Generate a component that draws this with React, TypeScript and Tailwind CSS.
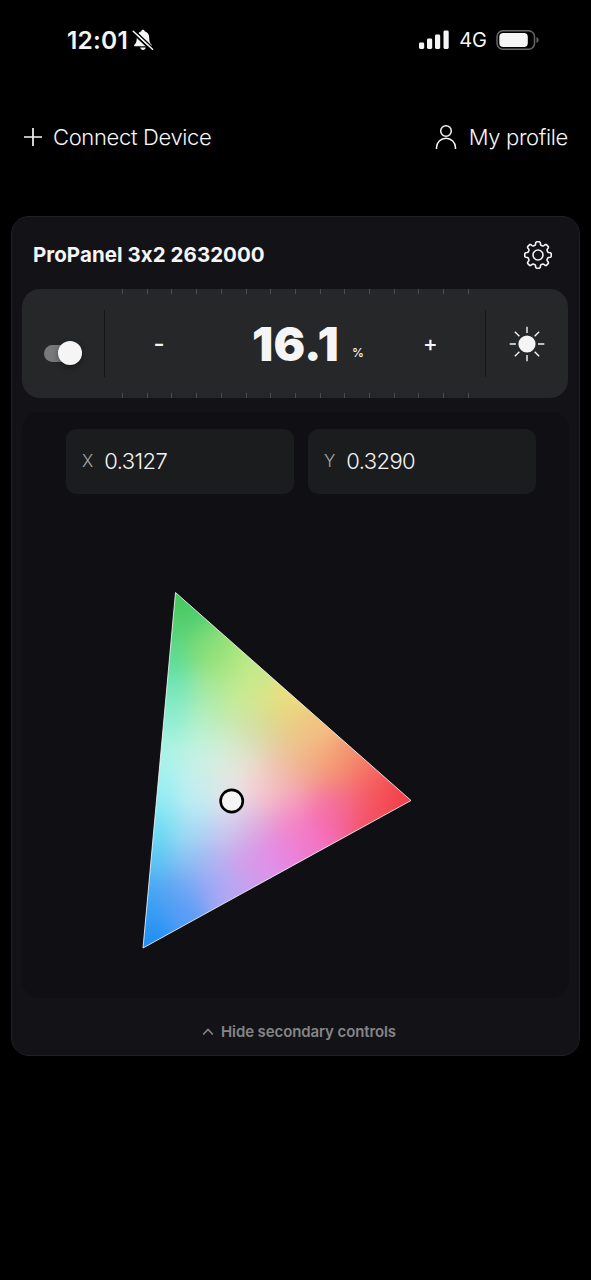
type Sample = [x: number, y: number, color: string];

// Gamut colours, in the coordinates of the chart
const samples: Sample[] = [
  [57, 28, "#45c75e"], [62, 55, "#55d073"], [82, 80, "#80dc76"], [50, 90, "#5adb98"],
  [102, 93, "#a3e47c"], [130, 105, "#c5ea8c"], [55, 120, "#78e7bd"], [90, 120, "#a5e8a0"],
  [115, 130, "#c3ec95"], [140, 130, "#d8e48a"], [167, 130, "#ecdf7c"], [50, 150, "#8cedd3"],
  [85, 150, "#b5efc4"], [115, 155, "#cbe9b4"], [140, 160, "#d8d99a"], [170, 155, "#e8cd85"],
  [195, 160, "#f3c283"], [45, 180, "#aef3e5"], [80, 180, "#c3f3e0"], [110, 185, "#d5f0dc"],
  [130, 180, "#dadfbe"], [165, 185, "#eac69a"], [195, 185, "#f5b080"], [225, 190, "#f49872"],
  [40, 205, "#a2f1f1"], [75, 210, "#c4f0ee"], [100, 205, "#dfe8e0"], [128, 203, "#f5dede"],
  [155, 205, "#f3bfb8"], [185, 205, "#f0ab8c"], [215, 205, "#f5956f"], [245, 205, "#f56a60"],
  [40, 230, "#8eebf5"], [75, 230, "#c0ecf4"], [112, 232, "#e5e3ee"], [145, 225, "#f4c3cc"],
  [175, 230, "#f6a0c0"], [205, 230, "#f57aa5"], [230, 225, "#f56878"], [285, 230, "#f33e48"],
  [260, 225, "#f45058"], [37, 260, "#6cdcf4"], [70, 260, "#a5def4"], [105, 260, "#c8cdf0"],
  [135, 255, "#dab0e0"], [170, 255, "#f28ac8"], [205, 250, "#f768b0"], [220, 240, "#f566a0"],
  [245, 247, "#f25060"], [35, 290, "#5cc5f3"], [70, 290, "#8fc5f2"], [95, 290, "#b5b5f3"],
  [125, 285, "#d5a0e8"], [155, 280, "#e785e4"], [185, 265, "#f077cc"], [30, 320, "#48a8f3"],
  [65, 315, "#6ea8f5"], [90, 315, "#9fa5f5"], [115, 318, "#b9a8f4"], [135, 300, "#da95ea"],
  [28, 345, "#2f98f3"], [60, 335, "#559cf5"], [25, 375, "#1f8ef3"],
];

const CELL = 7;

function colorAt(x: number, y: number) {
  let total = 0;
  const sum = [0, 0, 0];
  for (const [sx, sy, color] of samples) {
    const d = (x - sx) ** 2 + (y - sy) ** 2;
    const weight = Math.exp(-d / 430) + 1e-4 / (1 + d * d * 1e-4);
    const n = parseInt(color.slice(1), 16);
    sum[0] += weight * (n >> 16);
    sum[1] += weight * ((n >> 8) & 255);
    sum[2] += weight * (n & 255);
    total += weight;
  }
  return `rgb(${sum.map((c) => Math.round(c / total)).join(",")})`;
}

const cells: { x: number; y: number; fill: string }[] = [];
for (let y = 7; y < 400; y += CELL) {
  for (let x = 7; x < 310; x += CELL) {
    cells.push({ x, y, fill: colorAt(x + CELL / 2, y + CELL / 2) });
  }
}

const TRIANGLE = "55.5,22.5 291,230.5 23,378";

function GamutChart() {
  return (
    <svg width="310" height="400" viewBox="0 0 310 400">
      <defs>
        <clipPath id="gamut">
          <polygon points={TRIANGLE} />
        </clipPath>
        <filter id="smooth" colorInterpolationFilters="sRGB">
          <feGaussianBlur stdDeviation="5" />
        </filter>
      </defs>
      <g clipPath="url(#gamut)">
        <g filter="url(#smooth)">
          {cells.map((c) => (
            <rect key={`${c.x}-${c.y}`} x={c.x} y={c.y} width={CELL + 0.5} height={CELL + 0.5} fill={c.fill} />
          ))}
        </g>
      </g>
      <polygon points={TRIANGLE} fill="none" stroke="#fff" strokeOpacity="0.8" strokeWidth="1" />
      <circle cx="111.7" cy="231" r="11.1" fill="#f5f5f5" stroke="#000" strokeWidth="2.6" />
    </svg>
  );
}

function gearPath() {
  const steps: [number, number][] = [[-17, 10.2], [-13, 10.9], [-10.5, 12.6], [-6, 13.3], [6, 13.3], [10.5, 12.6], [13, 10.9], [17, 10.2]];
  const points: string[] = [];
  for (let tooth = 0; tooth < 8; tooth++) {
    for (const [offset, r] of steps) {
      const a = ((tooth * 45 + offset) * Math.PI) / 180;
      points.push(`${(15 + r * Math.cos(a)).toFixed(2)} ${(15 + r * Math.sin(a)).toFixed(2)}`);
    }
  }
  return `M${points.join("L")}Z`;
}

function GearIcon() {
  return (
    <svg width="30" height="30" viewBox="0 0 30 30" fill="none" stroke="#f2f2f2" strokeWidth="1.6" strokeLinejoin="round">
      <path d={gearPath()} />
      <circle cx="15" cy="15" r="5" />
    </svg>
  );
}

function SunIcon() {
  return (
    <svg width="36" height="36" viewBox="0 0 36 36" stroke="#f5f5f5" strokeWidth="1.4">
      <circle cx="18" cy="18" r="8.6" fill="#f5f5f5" stroke="none" />
      {[0, 45, 90, 135, 180, 225, 270, 315].map((a) => (
        <path key={a} d={a % 90 ? "M18 7.2V0.800" : "M18 6.900V0.700"} transform={`rotate(${a} 18 18)`} />
      ))}
    </svg>
  );
}

function StatusBar() {
  return (
    <div className="flex h-[80px] items-center justify-between pl-[67px] pr-[51px] text-[#f5f5f5]">
      <div className="flex items-center gap-[4px]">
        <span className="text-[24.5px] font-semibold tracking-[0.2px]">12:01</span>
        <svg width="22" height="22" viewBox="0 0 22 22">
          <path
            d="M11 .8c-.9 0-1.6.7-1.7 1.5C6.500 3.100 4.800 5.500 4.800 8.500c0 4-.8 5.600-2.200 7-.8.800-.5 1.800.5 1.800h15.800c1 0 1.300-1 .5-1.800-1.400-1.400-2.200-3-2.200-7 0-3-1.700-5.400-4.500-6.200C12.600 1.500 11.900.8 11 .8zM8.200 18.600c.3 1.400 1.400 2.300 2.800 2.300s2.500-.9 2.800-2.300z"
            fill="currentColor"
          />
          <path d="M0 3.200L19.500 21.500" stroke="#000" strokeWidth="2" />
          <path d="M1.900 0.900L21.400 19.200" stroke="#000" strokeWidth="1.500" />
          <path d="M1.200 2.200L20.500 20.300" stroke="currentColor" strokeWidth="1.500" strokeLinecap="round" />
        </svg>
      </div>
      <div className="flex items-center">
        <svg width="32" height="20" viewBox="0 0 32 20" fill="currentColor">
          <rect x="1" y="12.500" width="5.200" height="6.500" rx="1.400" />
          <rect x="9" y="8.500" width="5.200" height="10.500" rx="1.400" />
          <rect x="17" y="4.500" width="5.200" height="14.500" rx="1.400" />
          <rect x="25.500" y="0.500" width="5.200" height="18.500" rx="1.400" />
        </svg>
        <span className="ml-[9px] text-[20px]">4G</span>
        <svg className="ml-[9px]" width="44" height="20" viewBox="0 0 44 20">
          <rect x="1" y="0.800" width="37.500" height="18.400" rx="6" fill="none" stroke="#68686a" strokeWidth="1.500" />
          <rect x="3.300" y="3.100" width="28.500" height="13.800" rx="4" fill="currentColor" />
          <path d="M40.500 7v6c1.300-.5 2-1.600 2-3s-.7-2.500-2-3z" fill="#68686a" />
        </svg>
      </div>
    </div>
  );
}

function TickRow() {
  return (
    <div className="flex h-[5px] justify-between pl-[100px] pr-[99px]">
      {Array.from({ length: 15 }, (_, i) => (
        <span key={i} className="w-px bg-[#4a4c4d]" />
      ))}
    </div>
  );
}

function DimmerBar() {
  return (
    <div className="ml-[10px] mt-px flex h-[109px] w-[546px] flex-col justify-between overflow-hidden rounded-[18px] bg-[#252728]">
      <TickRow />
      <div className="flex h-[67px] items-center text-[#f5f5f5]">
        <div className="flex h-full w-[83px] items-center border-r border-[#151617] pl-[22px] pt-[19px]">
          <div className="flex h-[17px] w-[38px] items-center justify-end rounded-full bg-[#77797a]">
            <span className="h-[24px] w-[24px] shrink-0 rounded-full bg-[#f5f5f5] shadow-[0_2px_6px_rgba(0,0,0,0.4)]" />
          </div>
        </div>
        <div className="flex h-full grow items-center">
          <span className="ml-[48px] w-[12px] text-center text-[24px] font-medium">-</span>
          <span className="ml-[87px] w-[92px] text-[47px] font-black leading-none tracking-[0.2px]">16.1</span>
          <span className="ml-[8px] mt-[19px] w-[12px] text-[12px] font-medium">%</span>
          <span className="ml-[59px] text-[22px] font-medium">+</span>
        </div>
        <div className="flex h-full w-[83px] items-center justify-center border-l border-[#151617]">
          <SunIcon />
        </div>
      </div>
      <TickRow />
    </div>
  );
}

function Coordinate({ label, value }: { label: string; value: string }) {
  return (
    <div className="flex h-[65px] w-[228px] items-center gap-[11px] rounded-[10px] bg-[#1b1c1e] pl-[16px]">
      <span className="text-[17px] font-light text-[#a5a6a7]">{label}</span>
      <span className="text-[22px] font-light tracking-[-0.6px] text-[#f5f5f5]">{value}</span>
    </div>
  );
}

export default function App() {
  return (
    <div className="h-[1280px] w-[591px] overflow-hidden bg-black font-['Inter',sans-serif] [font-feature-settings:'calt'_0]">
      <StatusBar />
      <div className="mt-[36px] flex h-[42px] items-center justify-between pl-[23px] pr-[23px] text-[22px] font-light tracking-[-0.35px] text-[#f5f5f5]">
        <button className="flex items-center gap-[10px]">
          <svg width="20" height="20" viewBox="0 0 20 20" stroke="currentColor" strokeWidth="1.700">
            <path d="M10 1v18M1 10h18" />
          </svg>
          <span>Connect Device</span>
        </button>
        <button className="flex items-center gap-[12px]">
          <svg width="22" height="26" viewBox="0 0 22 26" fill="none" stroke="currentColor" strokeWidth="1.500">
            <circle cx="11" cy="7" r="5.300" />
            <path d="M1.500 25v-1.200a9.500 9.500 0 0 1 19 0V25" />
          </svg>
          <span>My profile</span>
        </button>
      </div>

      <div className="ml-[11px] mt-[58px] flex h-[840px] w-[569px] flex-col rounded-[18px] border border-[#212125] bg-[#131217]">
        <div className="flex h-[71px] items-center justify-between pl-[21px] pr-[26px] pt-[5px]">
          <h1 className="text-[20.5px] font-bold tracking-[0.05px] text-[#f5f5f5]">ProPanel 3x2 2632000</h1>
          <GearIcon />
        </div>
        <DimmerBar />
        <div className="mx-[10px] mt-[14px] h-[586px] rounded-[18px] bg-[#100f14] pt-[17px]">
          <div className="flex gap-[14px] pl-[44px]">
            <Coordinate label="X" value="0.3127" />
            <Coordinate label="Y" value="0.3290" />
          </div>
          <div className="ml-[98px] mt-[76px]">
            <GamutChart />
          </div>
        </div>
        <button className="flex grow items-center justify-center gap-[7px] pl-[7px] pt-[11px] text-[15px] font-semibold tracking-[-0.1px] text-[#858587]">
          <svg width="12" height="8" viewBox="0 0 12 8" fill="none" stroke="currentColor" strokeWidth="1.600">
            <path d="M1.200 6.500L6 1.500l4.800 5" />
          </svg>
          <span>Hide secondary controls</span>
        </button>
      </div>
    </div>
  );
}
